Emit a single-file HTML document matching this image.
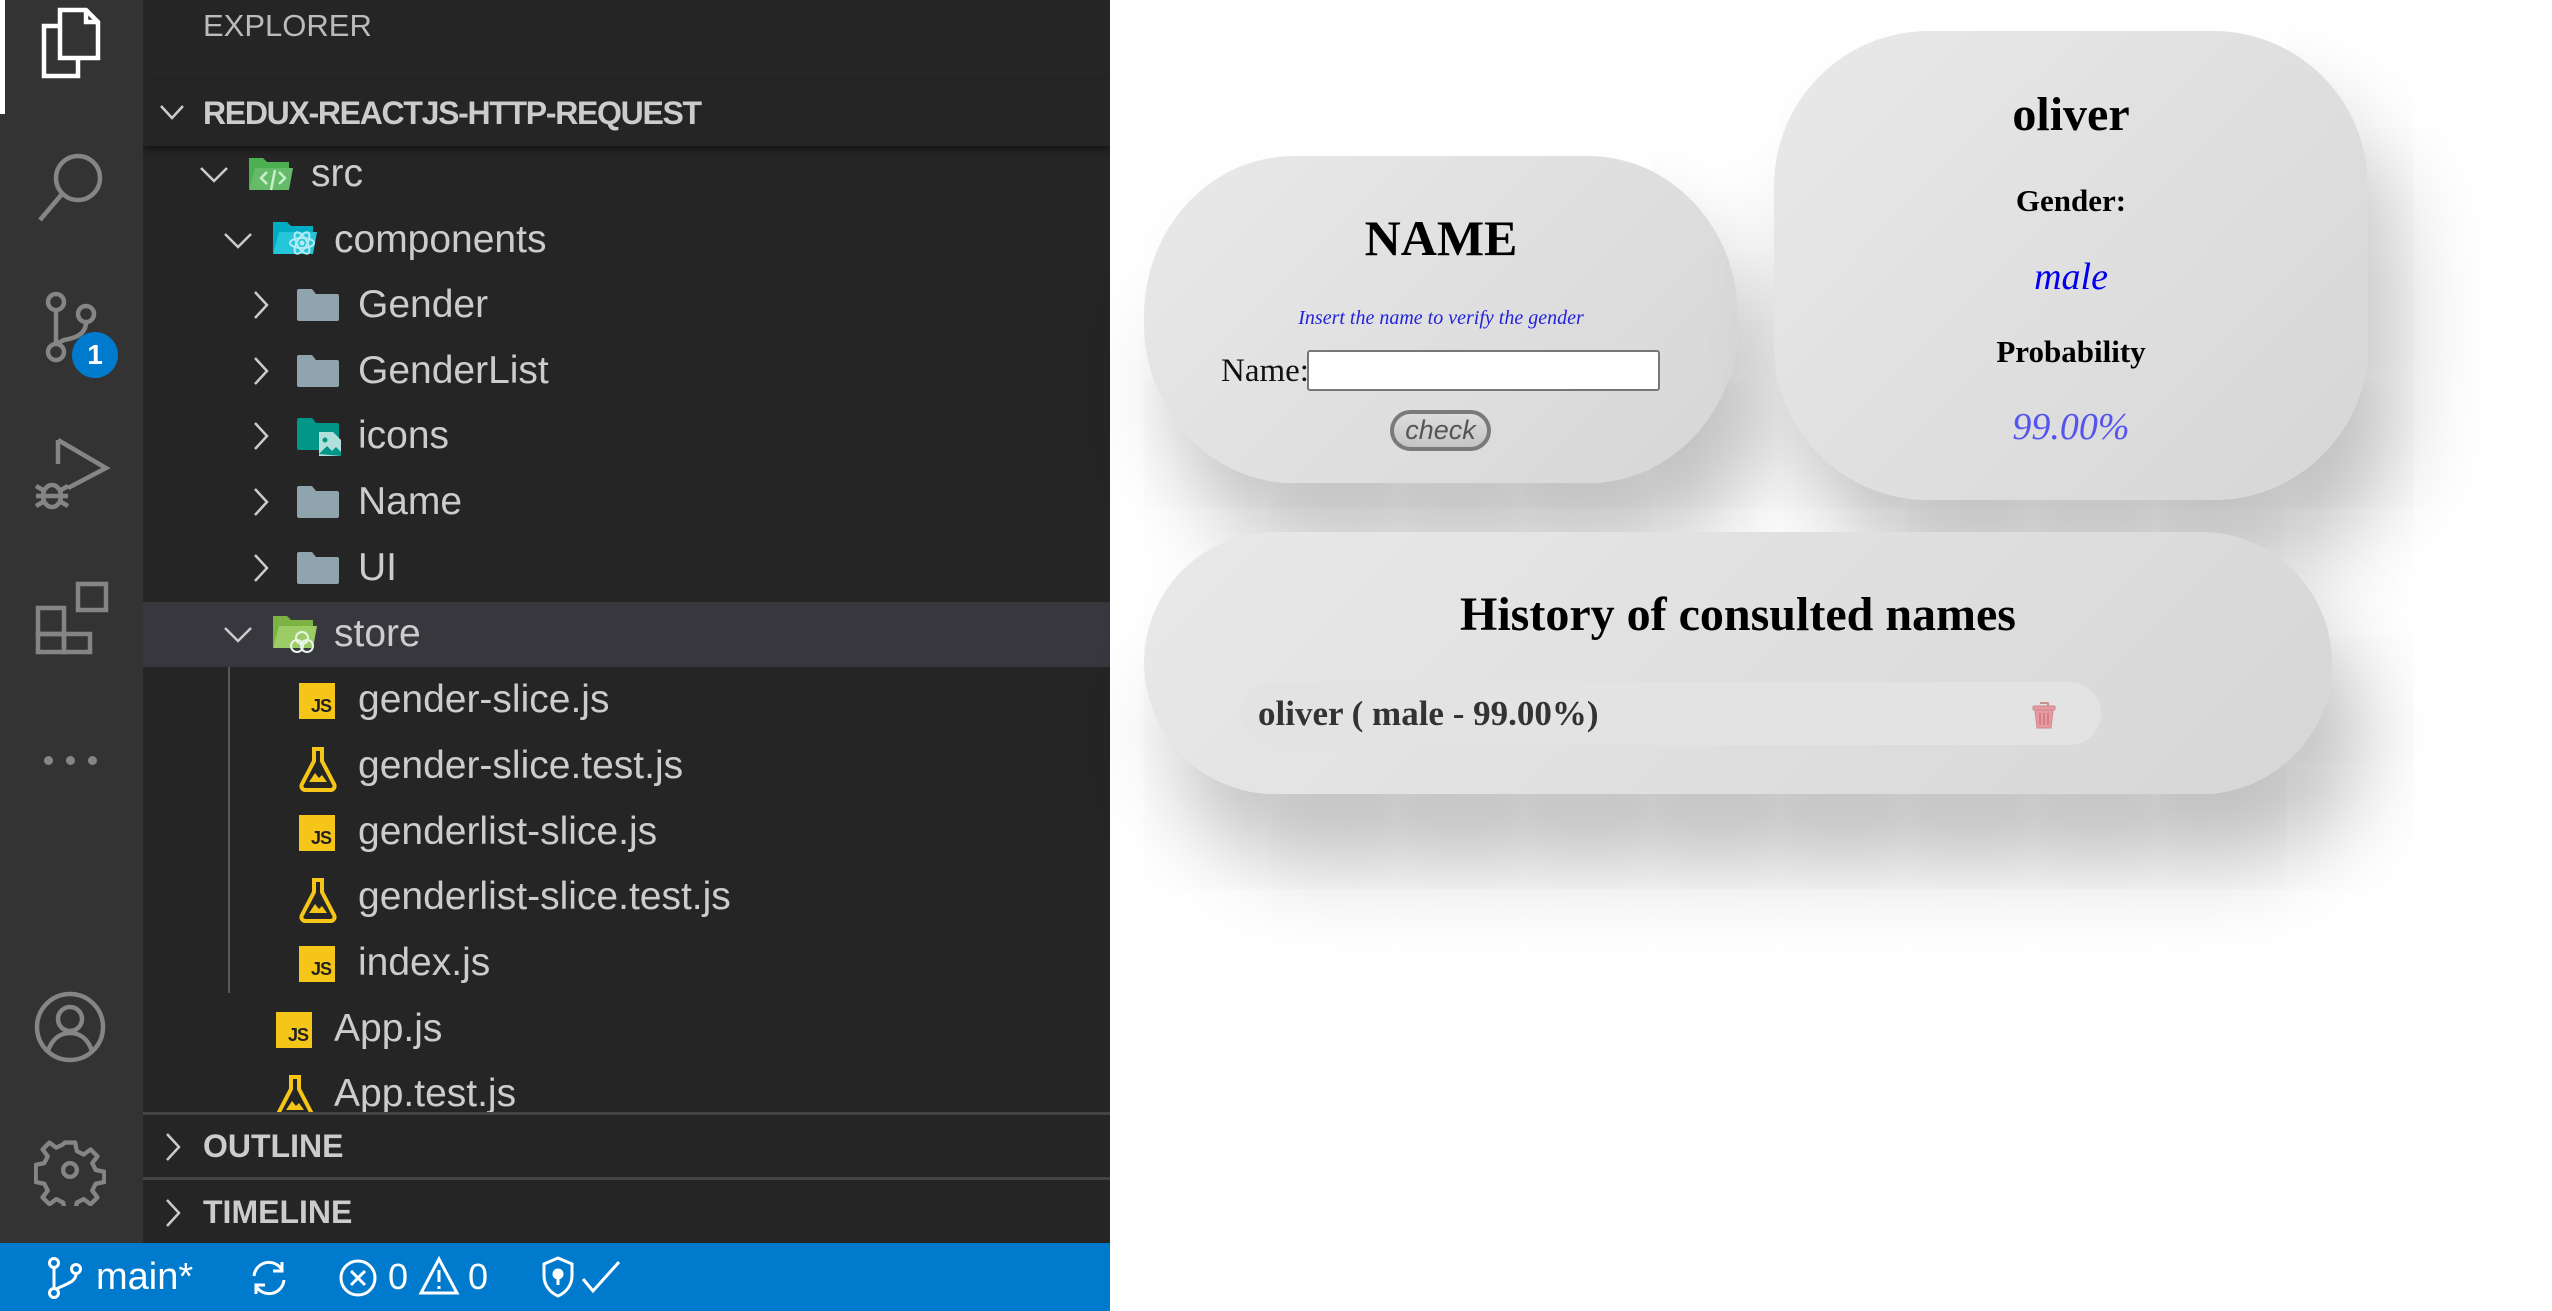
<!DOCTYPE html>
<html><head><meta charset="utf-8">
<style>
*{margin:0;padding:0;box-sizing:border-box}
body{width:2552px;height:1311px;overflow:hidden;background:#fff;position:relative;font-family:"Liberation Sans",sans-serif}
.abs{position:absolute}
#act{left:0;top:0;width:143px;height:1243px;background:#333}
#side{left:143px;top:0;width:967px;height:1243px;background:#252526;overflow:hidden}
#status{left:0;top:1243px;width:1110px;height:68px;background:#007acc;color:#fff;font-size:36px}
.row{position:absolute;left:0;width:967px;height:66px;color:#cccccc;font-size:39px;line-height:66px;white-space:nowrap}
.row span{position:absolute;top:0}
.card{position:absolute;background:linear-gradient(135deg,#e9e9e9 0%,#d6d6d6 100%);box-shadow:30px 70px 90px rgba(0,0,0,0.25)}
.serif{font-family:"Liberation Serif",serif}
.c{position:absolute;left:0;right:0;text-align:center}
</style></head><body>

<div id="act" class="abs">
  <div class="abs" style="left:0;top:0;width:5px;height:114px;background:#fff"></div>
  <svg class="abs" style="left:36px;top:6px" width="72" height="76" viewBox="0 0 72 76" fill="none" stroke="#fff" stroke-width="4.5">
    <path d="M24 4h26l12 12v36H24z"/><path d="M50 4v12h12"/><path d="M24 20H8v50h34V52"/>
  </svg>
  <svg class="abs" style="left:34px;top:148px" width="76" height="76" viewBox="0 0 76 76" fill="none" stroke="#858585" stroke-width="4.5">
    <circle cx="44" cy="30" r="22"/><path d="M28 46L6 72"/>
  </svg>
  <svg class="abs" style="left:36px;top:290px" width="72" height="80" viewBox="0 0 72 80" fill="none" stroke="#858585" stroke-width="4.5">
    <circle cx="20" cy="12" r="8"/><circle cx="20" cy="62" r="8"/><circle cx="50" cy="24" r="8"/><path d="M20 20v34"/><path d="M50 32c0 12-10 16-22 18l-8 4"/>
  </svg>
  <div class="abs" style="left:72px;top:332px;width:46px;height:46px;border-radius:50%;background:#007acc;color:#fff;font-weight:bold;font-size:28px;text-align:center;line-height:46px">1</div>
  <svg class="abs" style="left:32px;top:434px" width="80" height="80" viewBox="0 0 80 80" fill="none" stroke="#858585" stroke-width="4.5">
    <path d="M26 6v24M26 6l48 28-38 20"/><ellipse cx="20" cy="62" rx="9" ry="11"/><path d="M4 52l7 4M4 72l7-4M36 52l-7 4M36 72l-7-4M4 62h32"/>
  </svg>
  <svg class="abs" style="left:34px;top:580px" width="76" height="76" viewBox="0 0 76 76" fill="none" stroke="#858585" stroke-width="4.5">
    <rect x="4" y="28" width="26" height="26"/><rect x="4" y="54" width="26" height="18"/><rect x="30" y="54" width="26" height="18"/><rect x="44" y="4" width="28" height="26"/>
  </svg>
  <div class="abs" style="left:44px;top:756px;width:9px;height:9px;border-radius:50%;background:#858585"></div>
  <div class="abs" style="left:66px;top:756px;width:9px;height:9px;border-radius:50%;background:#858585"></div>
  <div class="abs" style="left:88px;top:756px;width:9px;height:9px;border-radius:50%;background:#858585"></div>
  <svg class="abs" style="left:34px;top:991px" width="72" height="72" viewBox="0 0 72 72" fill="none" stroke="#858585" stroke-width="4.5">
    <circle cx="36" cy="36" r="33"/><circle cx="36" cy="28" r="12"/><path d="M14 60c4-12 12-18 22-18s18 6 22 18"/>
  </svg>
  <svg class="abs" style="left:34px;top:1134px" width="72" height="72" viewBox="-6 -6 84 84" fill="none" stroke="#858585" stroke-width="5" stroke-linejoin="round">
    <path d="M30 4h12l2 10 8 4 8-6 8 8-6 8 4 8 10 2v12l-10 2-4 8 6 8-8 8-8-6-8 4-2 10H30l-2-10-8-4-8 6-8-8 6-8-4-8-10-2V30l10-2 4-8-6-8 8-8 8 6 8-4z"/><circle cx="36" cy="36" r="8"/>
  </svg>
</div>

<div id="side" class="abs">
  <div class="abs" style="left:60px;top:6px;color:#bbbbbb;font-size:31px;line-height:40px">EXPLORER</div>
  <div class="abs" style="left:0;top:80px;width:967px;height:66px;box-shadow:0 4px 6px rgba(0,0,0,0.45);background:#252526;z-index:2"></div>
  <svg class="abs" style="left:16px;top:100px;z-index:3" width="26" height="24" viewBox="0 0 26 24" fill="none" stroke="#ccc" stroke-width="2.5"><path d="M2 6l11 12 11-12"/></svg>
  <div class="abs" style="left:60px;top:80px;line-height:66px;color:#cccccc;font-weight:bold;font-size:32px;letter-spacing:-1.3px;z-index:3">REDUX-REACTJS-HTTP-REQUEST</div>

  <div class="abs" style="left:0;top:602px;width:967px;height:65px;background:#37373d"></div>
  <div class="abs" style="left:85px;top:667px;width:2px;height:326px;background:#585858"></div>

  <svg class="abs" style="left:56px;top:162px" width="30" height="24" viewBox="0 0 30 24" fill="none" stroke="#ccc" stroke-width="2.5"><path d="M2 6l13 13 13-13"/></svg>
  <svg class="abs" style="left:106px;top:156px" width="46" height="36" viewBox="0 0 46 36"><path d="M0 2h14l4 4h22v26H0z" fill="#4caf50"/><path d="M6 12h38l-4 22H0z" fill="#66bb6a"/><path d="M18 16l-6 6 6 6M30 16l6 6-6 6M26 14l-4 20" stroke="#c8f0c8" stroke-width="2.5" fill="none"/></svg>
  <div class="row" style="top:141px"><span style="left:168px">src</span></div>
  <svg class="abs" style="left:80px;top:228px" width="30" height="24" viewBox="0 0 30 24" fill="none" stroke="#ccc" stroke-width="2.5"><path d="M2 6l13 13 13-13"/></svg>
  <svg class="abs" style="left:130px;top:220px" width="46" height="38" viewBox="0 0 46 38"><path d="M0 2h14l4 4h22v26H0z" fill="#00acc1"/><path d="M6 12h38l-4 22H0z" fill="#26c6da"/><g stroke="#b2ebf2" stroke-width="2" fill="none"><ellipse cx="29" cy="23" rx="12" ry="5"/><ellipse cx="29" cy="23" rx="12" ry="5" transform="rotate(60 29 23)"/><ellipse cx="29" cy="23" rx="12" ry="5" transform="rotate(-60 29 23)"/></g><circle cx="29" cy="23" r="2.5" fill="#b2ebf2"/></svg>
  <div class="row" style="top:207px"><span style="left:191px">components</span></div>

  <svg class="abs" style="left:108px;top:290px" width="20" height="30" viewBox="0 0 20 30" fill="none" stroke="#ccc" stroke-width="2.5"><path d="M4 2l12 13-12 13"/></svg>
  <svg class="abs" style="left:154px;top:289px" width="42" height="32" viewBox="0 0 42 32"><path d="M2 0h13l4 5h21a2 2 0 0 1 2 2v23a2 2 0 0 1-2 2H2a2 2 0 0 1-2-2V2a2 2 0 0 1 2-2z" fill="#90a4ae"/></svg>
  <div class="row" style="top:272px"><span style="left:215px">Gender</span></div>

  <svg class="abs" style="left:108px;top:356px" width="20" height="30" viewBox="0 0 20 30" fill="none" stroke="#ccc" stroke-width="2.5"><path d="M4 2l12 13-12 13"/></svg>
  <svg class="abs" style="left:154px;top:355px" width="42" height="32" viewBox="0 0 42 32"><path d="M2 0h13l4 5h21a2 2 0 0 1 2 2v23a2 2 0 0 1-2 2H2a2 2 0 0 1-2-2V2a2 2 0 0 1 2-2z" fill="#90a4ae"/></svg>
  <div class="row" style="top:338px"><span style="left:215px">GenderList</span></div>

  <svg class="abs" style="left:108px;top:421px" width="20" height="30" viewBox="0 0 20 30" fill="none" stroke="#ccc" stroke-width="2.5"><path d="M4 2l12 13-12 13"/></svg>
  <svg class="abs" style="left:154px;top:418px" width="46" height="38" viewBox="0 0 46 38"><path d="M2 0h13l4 5h21a2 2 0 0 1 2 2v23a2 2 0 0 1-2 2H2a2 2 0 0 1-2-2V2a2 2 0 0 1 2-2z" fill="#009688"/><path d="M22 14h14l8 8v16H22z" fill="#b2dfdb"/><circle cx="28" cy="22" r="2.5" fill="#009688"/><path d="M22 36l8-8 5 5 4-4 5 5v4z" fill="#009688"/></svg>
  <div class="row" style="top:403px"><span style="left:215px">icons</span></div>

  <svg class="abs" style="left:108px;top:487px" width="20" height="30" viewBox="0 0 20 30" fill="none" stroke="#ccc" stroke-width="2.5"><path d="M4 2l12 13-12 13"/></svg>
  <svg class="abs" style="left:154px;top:486px" width="42" height="32" viewBox="0 0 42 32"><path d="M2 0h13l4 5h21a2 2 0 0 1 2 2v23a2 2 0 0 1-2 2H2a2 2 0 0 1-2-2V2a2 2 0 0 1 2-2z" fill="#90a4ae"/></svg>
  <div class="row" style="top:469px"><span style="left:215px">Name</span></div>

  <svg class="abs" style="left:108px;top:553px" width="20" height="30" viewBox="0 0 20 30" fill="none" stroke="#ccc" stroke-width="2.5"><path d="M4 2l12 13-12 13"/></svg>
  <svg class="abs" style="left:154px;top:552px" width="42" height="32" viewBox="0 0 42 32"><path d="M2 0h13l4 5h21a2 2 0 0 1 2 2v23a2 2 0 0 1-2 2H2a2 2 0 0 1-2-2V2a2 2 0 0 1 2-2z" fill="#90a4ae"/></svg>
  <div class="row" style="top:535px"><span style="left:215px">UI</span></div>

  <svg class="abs" style="left:80px;top:622px" width="30" height="24" viewBox="0 0 30 24" fill="none" stroke="#ccc" stroke-width="2.5"><path d="M2 6l13 13 13-13"/></svg>
  <svg class="abs" style="left:130px;top:614px" width="46" height="40" viewBox="0 0 46 40"><path d="M0 2h14l4 4h22v26H0z" fill="#7cb342"/><path d="M6 12h38l-4 22H0z" fill="#9ccc65"/><g stroke="#e8f5e9" stroke-width="2" fill="none"><circle cx="24" cy="32" r="6"/><circle cx="34" cy="32" r="6"/><circle cx="29" cy="24" r="6"/></g></svg>
  <div class="row" style="top:601px"><span style="left:191px">store</span></div>

  <div class="abs" style="left:156px;top:683px;width:36px;height:36px;background:#f5c518;color:#222;font-weight:bold;font-size:18px;line-height:46px;text-align:right;padding-right:4px;letter-spacing:-1px">JS</div>
  <div class="row" style="top:667px"><span style="left:215px">gender-slice.js</span></div>

  <svg class="abs" style="left:156px;top:746px" width="38" height="46" viewBox="0 0 38 46"><path d="M13 3h12M15 3v12L3 38a4 4 0 0 0 4 6h24a4 4 0 0 0 4-6L23 15V3" fill="none" stroke="#f5c518" stroke-width="4"/><path d="M10 36l6-9 4 5 3-3 5 7z" fill="#f5c518"/></svg>
  <div class="row" style="top:733px"><span style="left:215px">gender-slice.test.js</span></div>

  <div class="abs" style="left:156px;top:815px;width:36px;height:36px;background:#f5c518;color:#222;font-weight:bold;font-size:18px;line-height:46px;text-align:right;padding-right:4px;letter-spacing:-1px">JS</div>
  <div class="row" style="top:799px"><span style="left:215px">genderlist-slice.js</span></div>

  <svg class="abs" style="left:156px;top:877px" width="38" height="46" viewBox="0 0 38 46"><path d="M13 3h12M15 3v12L3 38a4 4 0 0 0 4 6h24a4 4 0 0 0 4-6L23 15V3" fill="none" stroke="#f5c518" stroke-width="4"/><path d="M10 36l6-9 4 5 3-3 5 7z" fill="#f5c518"/></svg>
  <div class="row" style="top:864px"><span style="left:215px">genderlist-slice.test.js</span></div>

  <div class="abs" style="left:156px;top:946px;width:36px;height:36px;background:#f5c518;color:#222;font-weight:bold;font-size:18px;line-height:46px;text-align:right;padding-right:4px;letter-spacing:-1px">JS</div>
  <div class="row" style="top:930px"><span style="left:215px">index.js</span></div>

  <div class="abs" style="left:133px;top:1012px;width:36px;height:36px;background:#f5c518;color:#222;font-weight:bold;font-size:18px;line-height:46px;text-align:right;padding-right:4px;letter-spacing:-1px">JS</div>
  <div class="row" style="top:996px"><span style="left:191px">App.js</span></div>

  <svg class="abs" style="left:133px;top:1074px" width="38" height="46" viewBox="0 0 38 46"><path d="M13 3h12M15 3v12L3 38a4 4 0 0 0 4 6h24a4 4 0 0 0 4-6L23 15V3" fill="none" stroke="#f5c518" stroke-width="4"/><path d="M10 36l6-9 4 5 3-3 5 7z" fill="#f5c518"/></svg>
  <div class="row" style="top:1061px;height:52px;overflow:hidden"><span style="left:191px">App.test.js</span></div>

  <div class="abs" style="left:0;top:1113px;width:967px;height:130px;background:#252526"></div>
  <div class="abs" style="left:0;top:1112px;width:967px;height:3px;background:#444"></div>
  <div class="abs" style="left:0;top:1177px;width:967px;height:3px;background:#444"></div>
  <svg class="abs" style="left:20px;top:1132px" width="20" height="30" viewBox="0 0 20 30" fill="none" stroke="#ccc" stroke-width="2.5"><path d="M4 2l12 13-12 13"/></svg>
  <div class="abs" style="left:60px;top:1126px;line-height:40px;color:#cccccc;font-weight:bold;font-size:32px">OUTLINE</div>
  <svg class="abs" style="left:20px;top:1198px" width="20" height="30" viewBox="0 0 20 30" fill="none" stroke="#ccc" stroke-width="2.5"><path d="M4 2l12 13-12 13"/></svg>
  <div class="abs" style="left:60px;top:1192px;line-height:40px;color:#cccccc;font-weight:bold;font-size:32px">TIMELINE</div>
</div>

<div id="status" class="abs">
  <svg class="abs" style="left:46px;top:14px" width="38" height="42" viewBox="0 0 38 42" fill="none" stroke="#fff" stroke-width="3"><circle cx="8" cy="6" r="4.5"/><circle cx="8" cy="36" r="4.5"/><circle cx="30" cy="12" r="4.5"/><path d="M8 11v20M30 17c0 8-10 10-20 15"/></svg>
  <div class="abs" style="left:96px;top:0;line-height:68px;font-size:38px">main*</div>
  <svg class="abs" style="left:248px;top:15px" width="42" height="40" viewBox="0 0 42 40" fill="none" stroke="#fff" stroke-width="3"><path d="M6 18a15 15 0 0 1 28-6M36 22a15 15 0 0 1-28 6"/><path d="M34 4v9h-9M8 36v-9h9"/></svg>
  <svg class="abs" style="left:338px;top:15px" width="40" height="40" viewBox="0 0 40 40" fill="none" stroke="#fff" stroke-width="3"><circle cx="20" cy="20" r="17"/><path d="M13 13l14 14M27 13L13 27"/></svg>
  <div class="abs" style="left:388px;top:0;line-height:68px">0</div>
  <svg class="abs" style="left:418px;top:13px" width="42" height="40" viewBox="0 0 42 40" fill="none" stroke="#fff" stroke-width="3"><path d="M21 3L3 37h36z"/><path d="M21 14v12M21 30v3"/></svg>
  <div class="abs" style="left:468px;top:0;line-height:68px">0</div>
  <svg class="abs" style="left:540px;top:12px" width="36" height="44" viewBox="0 0 36 44" fill="none" stroke="#fff" stroke-width="3"><path d="M18 3l14 6v12c0 10-7 17-14 20C11 38 4 31 4 21V9z"/><circle cx="18" cy="19" r="4" fill="#fff"/><path d="M18 22v8"/></svg>
  <svg class="abs" style="left:580px;top:16px" width="42" height="36" viewBox="0 0 42 36" fill="none" stroke="#fff" stroke-width="3"><path d="M3 20l10 12L39 3"/></svg>
</div>

<div class="card" style="left:1144px;top:156px;width:594px;height:327px;border-radius:150px / 160px">
  <div class="c serif" style="top:52px;font-size:50px;font-weight:bold;line-height:60px">NAME</div>
  <div class="c serif" style="top:150px;font-size:20px;font-style:italic;color:#2222dd;line-height:24px">Insert the name to verify the gender</div>
  <div class="abs serif" style="left:77px;top:195px;font-size:33px;line-height:40px;color:#111">Name:</div>
  <div class="abs" style="left:163px;top:194px;width:353px;height:41px;background:#fff;border:2px solid #777;border-radius:3px"></div>
  <div class="abs" style="left:246px;top:254px;width:101px;height:41px;border-radius:21px;border:4px solid #7a7a7a;background:linear-gradient(#ddd,#c4c4c4);color:#555;font-style:italic;font-size:27px;text-align:center;line-height:33px">check</div>
</div>

<div class="card" style="left:1774px;top:31px;width:594px;height:469px;border-radius:155px">
  <div class="c serif" style="top:54px;font-size:48px;font-weight:bold;line-height:60px">oliver</div>
  <div class="c serif" style="top:151px;font-size:31px;font-weight:bold;line-height:38px">Gender:</div>
  <div class="c serif" style="top:223px;font-size:38px;font-style:italic;color:#0000ee;line-height:46px">male</div>
  <div class="c serif" style="top:302px;font-size:31px;font-weight:bold;line-height:38px">Probability</div>
  <div class="c serif" style="top:373px;font-size:38px;font-style:italic;color:#5555ee;line-height:46px">99.00%</div>
</div>

<div class="card" style="left:1144px;top:532px;width:1188px;height:262px;border-radius:131px">
  <div class="c serif" style="top:53px;font-size:48px;font-weight:bold;line-height:60px">History of consulted names</div>
  <div class="abs" style="left:96px;top:150px;width:861px;height:63px;border-radius:32px;background:#e3e3e3">
    <div class="abs serif" style="left:18px;top:0;line-height:63px;font-size:35px;font-weight:bold;color:#333">oliver ( male - 99.00%)</div>
    <svg class="abs" style="left:791px;top:18px" width="26" height="30" viewBox="0 0 26 30"><path d="M9 3h8v3" fill="none" stroke="#b77" stroke-width="1.5"/><rect x="2" y="6" width="22" height="4" rx="1" fill="#e79aa3" stroke="#c88" stroke-width="1"/><path d="M4 10h18l-2 18H6z" fill="#e79aa3" stroke="#c88" stroke-width="1"/><path d="M9 13v12M13 13v12M17 13v12" stroke="#c77" stroke-width="1.5"/></svg>
  </div>
</div>

</body></html>
